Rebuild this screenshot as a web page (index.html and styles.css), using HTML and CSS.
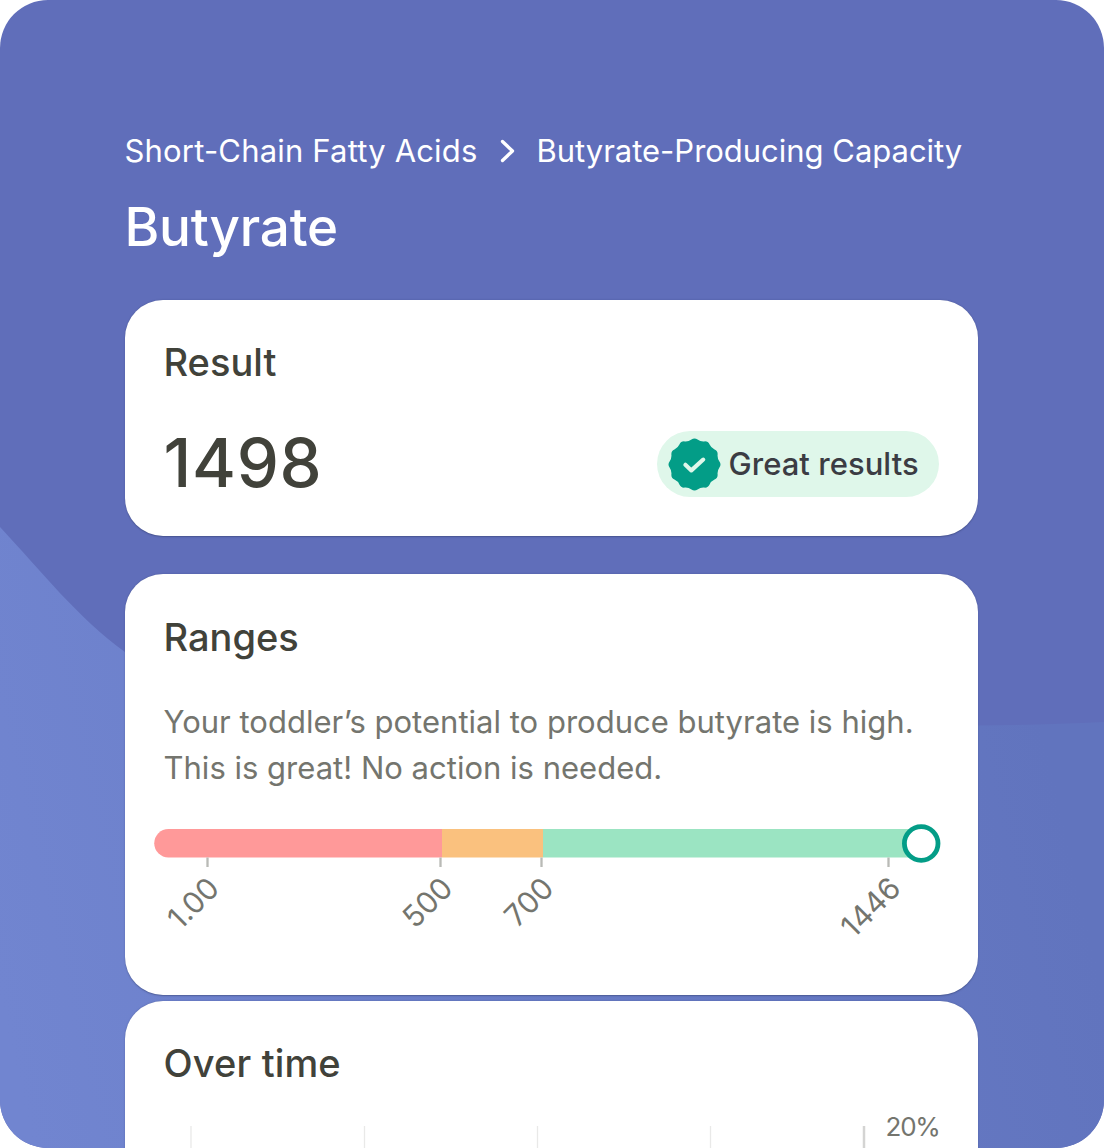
FILE: index.html
```html
<!DOCTYPE html>
<html lang="en">
<head>
<meta charset="utf-8">
<title>Butyrate</title>
<link rel="stylesheet" href="styles.css">
</head>
<body>
<main class="screen">
  <svg class="backdrop" viewBox="0 0 1104 1148" aria-hidden="true">
    <defs>
      <linearGradient id="wave" gradientUnits="userSpaceOnUse" x1="0" y1="1000" x2="1050" y2="760">
        <stop offset="0" stop-color="#7185d0"/>
        <stop offset="1" stop-color="#6174be"/>
      </linearGradient>
    </defs>
    <path fill="url(#wave)" d="M0 527C42 572 78 618 125 652C330 800 620 725 978 725.500Q1045 725 1104 722V1148H0Z"/>
  </svg>

  <nav class="crumbs">
    <span class="crumb-parent">Short-Chain Fatty Acids</span>
    <svg class="chevron" viewBox="0 0 16 24"><path d="M2.500 2.500L12.500 12L2.500 21.500"/></svg>
    <span class="crumb-current">Butyrate-Producing Capacity</span>
  </nav>
  <h1 class="title">Butyrate</h1>

  <section class="card result">
    <h2 class="heading heading-result">Result</h2>
    <div class="result-row">
      <span class="score">1498</span>
      <span class="badge">
        <svg class="seal" viewBox="-27 -27 54 54">
          <path class="seal-shape" d="M25.39-3.11Q27.6 0 25.39 3.11Q23.18 6.21 23.54 10Q23.9 13.8 20.44 15.39Q16.97 16.97 15.39 20.44Q13.8 23.9 10 23.54Q6.21 23.18 3.11 25.39Q0 27.6-3.11 25.39Q-6.21 23.18-10 23.54Q-13.8 23.9-15.39 20.44Q-16.97 16.97-20.44 15.39Q-23.9 13.8-23.54 10Q-23.18 6.21-25.39 3.11Q-27.6 0-25.39-3.11Q-23.18-6.21-23.54-10Q-23.9-13.8-20.44-15.39Q-16.97-16.97-15.39-20.44Q-13.8-23.9-10-23.54Q-6.21-23.18-3.11-25.39Q0-27.6 3.11-25.39Q6.21-23.18 10-23.54Q13.8-23.9 15.39-20.44Q16.97-16.97 20.44-15.39Q23.9-13.8 23.54-10Q23.18-6.21 25.39-3.11Z"/>
          <path class="seal-check" d="M-9.300 0.300L-3.200 6L8.900-5"/>
        </svg>
        <span class="badge-text">Great results</span>
      </span>
    </div>
  </section>

  <section class="card ranges">
    <h2 class="heading heading-ranges">Ranges</h2>
    <p class="summary">Your toddler’s potential to produce butyrate is high.<br>This is great! No action is needed.</p>
    <svg class="scale" viewBox="0 0 790 140">
      <path fill="#ff9999" d="M14.500 5H288V33.500H14.500A14.250 14.250 0 0 1 14.500 5Z"/>
      <rect fill="#fac17e" x="288" y="5" width="101" height="28.500"/>
      <rect fill="#9be4c2" x="389" y="5" width="378" height="28.500"/>
      <g class="ticks">
        <path d="M53.500 33.500V43M286.500 33.500V43M387.500 33.500V43M734.500 33.500V43"/>
      </g>
      <circle class="marker" cx="767.200" cy="19.500" r="16.800"/>
      <g class="scale-labels">
        <text transform="translate(67.200 66) rotate(-45)">1.00</text>
        <text transform="translate(300.700 66) rotate(-45)">500</text>
        <text transform="translate(401.700 66) rotate(-45)">700</text>
        <text transform="translate(748.700 66) rotate(-45)">1446</text>
      </g>
    </svg>
  </section>

  <section class="card history">
    <h2 class="heading heading-history">Over time</h2>
    <div class="chart">
      <svg class="grid" viewBox="0 0 702 40">
        <path class="grid-line" d="M27 0V40M200.500 0V40M373.500 0V40M546.500 0V40"/>
        <path class="grid-axis" d="M700 0V40"/>
      </svg>
      <span class="axis-label">20%</span>
    </div>
  </section>
</main>
</body>
</html>
```

FILE: styles.css
```css
* { box-sizing: border-box; }

body {
  margin: 0;
  background: #fff;
  font-family: Inter, "Liberation Sans", sans-serif;
}

.screen {
  position: relative;
  display: flex;
  flex-direction: column;
  width: 1104px;
  height: 1148px;
  padding: 127px 126.500px 0 124.500px;
  overflow: hidden;
  border-radius: 48px;
  background: #606eba;
}

.backdrop {
  position: absolute;
  inset: 0;
  width: 1104px;
  height: 1148px;
}

.crumbs, .title, .card { position: relative; margin: 0; flex-shrink: 0; }

.crumbs {
  display: flex;
  align-items: center;
  height: 48px;
  color: #fff;
  font-size: 31px;
  line-height: 48px;
  white-space: nowrap;
}

.crumb-parent { width: 375px; letter-spacing: 0.180px; }
.crumb-current { margin-left: 21px; letter-spacing: -0.020px; }

.chevron { width: 16px; height: 24px; flex-shrink: 0; }
.chevron path {
  fill: none;
  stroke: #fff;
  stroke-width: 3.300;
  stroke-linecap: round;
  stroke-linejoin: round;
}

.title {
  height: 70px;
  margin-top: 16.500px;
  color: #fff;
  font-size: 53px;
  font-weight: 500;
  line-height: 70px;
  letter-spacing: -0.250px;
}

.card {
  padding: 0 38.500px 0 39px;
  border-radius: 38px;
  background: #fff;
  box-shadow: 0 0.500px 1.500px rgba(40, 50, 90, 0.450);
}

.result { height: 236.500px; margin-top: 38.100px; padding-top: 37.400px; }
.ranges { height: 421px; margin-top: 38px; padding-top: 38.400px; }
.history { height: 200px; margin-top: 5.500px; padding-top: 37.400px; }

.heading {
  margin: 0;
  color: #41423a;
  font-size: 38px;
  font-weight: 500;
  line-height: 50px;
}
.heading-history { letter-spacing: 0.150px; }

.result-row {
  display: flex;
  align-items: center;
  justify-content: space-between;
  height: 80px;
  margin-top: 36px;
}

.score {
  color: #41423a;
  font-size: 67px;
  font-weight: 500;
  line-height: 80px;
  letter-spacing: 0.700px;
}

.badge {
  display: flex;
  align-items: center;
  width: 282.500px;
  height: 66px;
  margin-top: 3px;
  padding-left: 11px;
  gap: 8px;
  border-radius: 33px;
  background: #dff7ea;
}

.seal { width: 53px; height: 53px; flex-shrink: 0; }
.seal-shape { fill: #039d87; }
.seal-check {
  fill: none;
  stroke: #dff7ea;
  stroke-width: 4.200;
  stroke-linecap: round;
  stroke-linejoin: round;
}

.badge-text {
  color: #3b3c43;
  font-size: 31px;
  font-weight: 500;
  line-height: 38px;
  letter-spacing: 0.040px;
  white-space: nowrap;
}

.summary {
  margin: 36.600px 0 0;
  color: #74756e;
  font-size: 31px;
  line-height: 46px;
  letter-spacing: 0.010px;
  white-space: nowrap;
}

.scale {
  display: block;
  width: 790px;
  height: 140px;
  margin: 32.600px 0 0 -9.800px;
}
.ticks path { fill: none; stroke: #b9bab6; stroke-width: 2.300; }
.marker { fill: #fff; stroke: #039d87; stroke-width: 4.800; }
.scale-labels {
  fill: #74756e;
  font-size: 30px;
  text-anchor: end;
}

.chart {
  display: flex;
  align-items: flex-start;
  margin-top: 37.600px;
  gap: 20px;
}
.grid { width: 702px; height: 40px; flex-shrink: 0; }
.grid-line { fill: none; stroke: #e9e9e8; stroke-width: 1.300; }
.grid-axis { fill: none; stroke: #d4d4d3; stroke-width: 2.500; }
.axis-label {
  margin-top: -15px;
  color: #74756e;
  font-size: 26px;
  line-height: 32px;
  letter-spacing: -1.200px;
}
```
